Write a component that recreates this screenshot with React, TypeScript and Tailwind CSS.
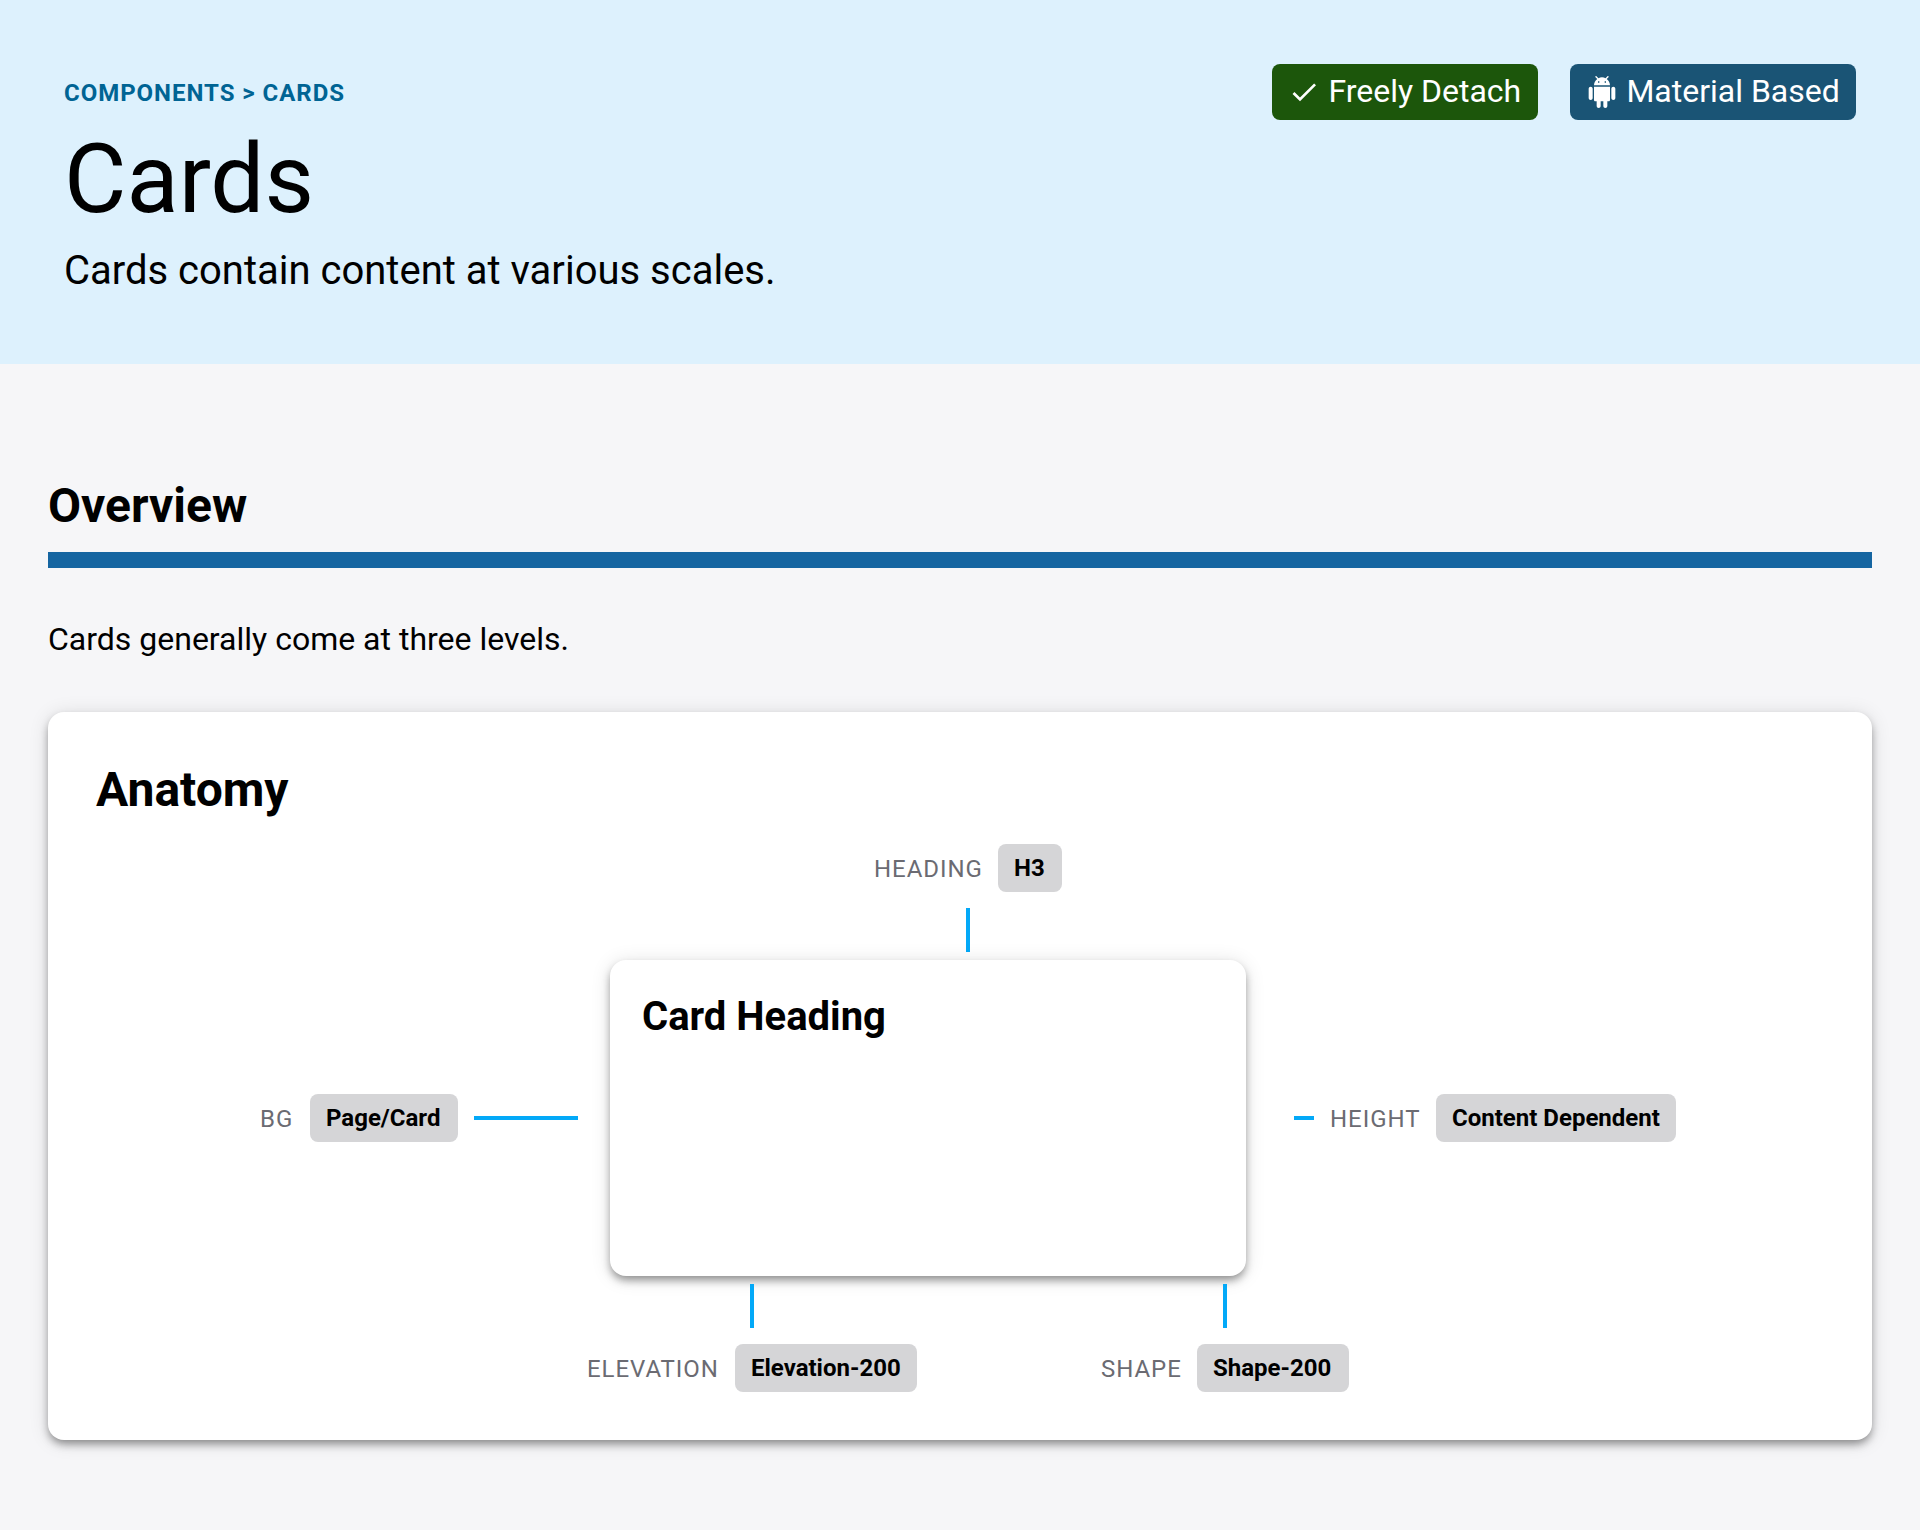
import type { ReactNode } from "react";

const ELEVATION =
  "shadow-[0px_5px_8px_-1px_rgba(0,0,0,0.4),0px_2px_20px_0px_rgba(0,0,0,0.12)]";

function CheckIcon() {
  return (
    <svg viewBox="0 0 24 24" className="size-8" fill="currentColor">
      <path d="M9 16.17 4.83 12l-1.42 1.41L9 19 21 7l-1.41-1.41z" />
    </svg>
  );
}

function AndroidIcon() {
  return (
    <svg viewBox="0 0 24 24" className="size-8" fill="currentColor">
      <path d="M6 18c0 .55.45 1 1 1h1v3.5c0 .83.67 1.5 1.5 1.5s1.5-.67 1.5-1.5V19h2v3.5c0 .83.67 1.5 1.5 1.5s1.5-.67 1.5-1.5V19h1c.55 0 1-.45 1-1V8H6v10zM3.5 8C2.67 8 2 8.67 2 9.5v7c0 .83.67 1.5 1.5 1.5S5 17.33 5 16.5v-7C5 8.67 4.33 8 3.5 8zm17 0c-.83 0-1.5.67-1.5 1.5v7c0 .83.67 1.5 1.5 1.5s1.5-.67 1.5-1.5v-7c0-.83-.67-1.5-1.5-1.5zm-4.97-5.84 1.3-1.3c.2-.2.2-.51 0-.71-.2-.2-.51-.2-.71 0l-1.48 1.48C13.85 1.23 12.95 1 12 1c-.96 0-1.86.23-2.66.63L7.85.15c-.2-.2-.51-.2-.71 0-.2.2-.2.51 0 .71l1.31 1.31C6.97 3.26 6 5.01 6 7h12c0-1.99-.97-3.75-2.47-4.84zM10 5H9V4h1v1zm5 0h-1V4h1v1z" />
    </svg>
  );
}

function Badge({ box, icon, children }: { box: string; icon: ReactNode; children: ReactNode }) {
  return (
    <div className={`flex h-14 items-center gap-2 rounded-lg pl-4 text-[32px] leading-[38px] text-white ${box}`}>
      {icon}
      <span className="pb-0.5 pl-[0.4px] whitespace-nowrap">{children}</span>
    </div>
  );
}

function Spec({ label, value, labelWidth, valueWidth }: { label: string; value: string; labelWidth: string; valueWidth: string }) {
  return (
    <div className="flex h-12 items-center gap-4 text-2xl leading-8 whitespace-nowrap">
      <span className={`pt-0.5 tracking-[0.96px] text-[#6b6b72] ${labelWidth}`}>{label}</span>
      <span className={`flex h-12 items-center rounded-lg bg-[#d5d5d7] pl-4 font-bold text-black ${valueWidth}`}>{value}</span>
    </div>
  );
}

function VerticalLine() {
  return <div className="h-11 w-1 bg-[#03a9f8]" />;
}

export default function App() {
  return (
    <div className="min-h-[1530px] w-[1920px] bg-[#f6f6f8] font-['Roboto',sans-serif] text-black">
      <header className="flex h-[364px] items-start justify-between bg-[#ddf1fd] px-16 pt-16">
        <div>
          <div className="mt-[13px] text-2xl leading-8 font-bold tracking-[0.96px] text-[#006494]">
            COMPONENTS &gt; CARDS
          </div>
          <h1 className="mt-[14px] text-[96px] leading-[112px]">Cards</h1>
          <p className="mt-2.5 text-[40px] leading-[52px]">Cards contain content at various scales.</p>
        </div>
        <div className="flex gap-8">
          <Badge box="w-[266px] bg-[#1c560b]" icon={<CheckIcon />}>Freely Detach</Badge>
          <Badge box="w-[286px] bg-[#1a5475]" icon={<AndroidIcon />}>Material Based</Badge>
        </div>
      </header>

      <main className="px-12 pt-28">
        <h2 className="text-5xl leading-[60px] font-bold">Overview</h2>
        <div className="mt-4 h-4 bg-[#1565a1]" />
        <p className="mt-[51px] text-[32px] leading-10">Cards generally come at three levels.</p>

        <section className={`mt-[53px] h-[728px] rounded-2xl bg-white px-12 pt-12 ${ELEVATION}`}>
          <h2 className="text-5xl leading-[60px] font-bold">Anatomy</h2>
          <div className="mt-6 flex flex-col">
            <div className="ml-[778px] flex w-fit flex-col items-center gap-4">
              <Spec label="HEADING" value="H3" labelWidth="w-[108px]" valueWidth="w-16" />
              <VerticalLine />
            </div>
            <div className="mt-2 ml-[164px] flex items-center">
              <div className="flex w-[318px] items-center justify-end gap-4">
                <Spec label="BG" value="Page/Card" labelWidth="w-[34px]" valueWidth="w-[148px]" />
                <div className="h-1 w-[104px] bg-[#03a9f8]" />
              </div>
              <div className={`ml-8 h-[316px] w-[636px] shrink-0 rounded-2xl bg-white px-8 pt-[33px] ${ELEVATION}`}>
                <h3 className="text-[40px] leading-[48px] font-bold">Card Heading</h3>
              </div>
              <div className="ml-12 flex items-center gap-4">
                <div className="h-1 w-5 bg-[#03a9f8]" />
                <Spec label="HEIGHT" value="Content Dependent" labelWidth="w-[90px]" valueWidth="w-60" />
              </div>
            </div>
            <div className="relative mt-2 ml-[491px] flex justify-between pr-[475px]">
              <div className="flex flex-col items-center gap-4">
                <VerticalLine />
                <Spec label="ELEVATION" value="Elevation-200" labelWidth="w-[132px]" valueWidth="w-[182px]" />
              </div>
              <div className="flex flex-col items-center gap-4">
                <VerticalLine />
                <Spec label="SHAPE" value="Shape-200" labelWidth="w-20" valueWidth="w-[152px]" />
              </div>
            </div>
          </div>
        </section>
      </main>
    </div>
  );
}
